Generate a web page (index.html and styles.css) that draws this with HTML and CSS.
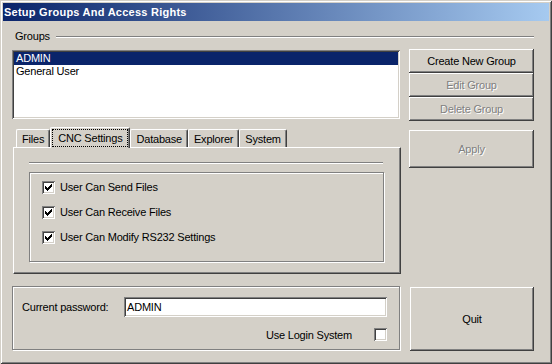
FILE: index.html
```html
<!DOCTYPE html>
<html>
<head>
<meta charset="utf-8">
<title>Setup Groups And Access Rights</title>
<link rel="stylesheet" href="styles.css">
</head>
<body>
<div class="window">
  <div class="titlebar">Setup Groups And Access Rights</div>
  <div class="main">
    <div class="section-head"><span>Groups</span><div class="etch-line"></div></div>

    <div class="listbox">
      <div class="item selected">ADMIN</div>
      <div class="item">General User</div>
    </div>
    <div class="btn-stack">
      <button class="btn">Create New Group</button>
      <button class="btn disabled">Edit Group</button>
      <button class="btn disabled">Delete Group</button>
    </div>

    <div class="tabs">
      <div class="tab-strip">
        <div class="tab">Files</div>
        <div class="tab active"><span class="focus">CNC Settings</span></div>
        <div class="tab">Database</div>
        <div class="tab">Explorer</div>
        <div class="tab">System</div>
      </div>
      <div class="tab-panel">
        <div class="etch-line panel-line"></div>
        <div class="groupbox checks">
          <div class="check-row"><span class="checkbox"><svg viewBox="0 0 13 13" width="13" height="13"><path d="M3 5h1v1h1v1h1v-1h1v-1h1v-1h1v-1h1v3h-1v1h-1v1h-1v1h-1v1h-1v-1h-1v-1h-1z" fill="#000"/></svg></span>User Can Send Files</div>
          <div class="check-row"><span class="checkbox"><svg viewBox="0 0 13 13" width="13" height="13"><path d="M3 5h1v1h1v1h1v-1h1v-1h1v-1h1v-1h1v3h-1v1h-1v1h-1v1h-1v1h-1v-1h-1v-1h-1z" fill="#000"/></svg></span>User Can Receive Files</div>
          <div class="check-row"><span class="checkbox"><svg viewBox="0 0 13 13" width="13" height="13"><path d="M3 5h1v1h1v1h1v-1h1v-1h1v-1h1v-1h1v3h-1v1h-1v1h-1v1h-1v1h-1v-1h-1v-1h-1z" fill="#000"/></svg></span>User Can Modify RS232 Settings</div>
        </div>
      </div>
    </div>
    <button class="btn disabled apply">Apply</button>

    <div class="groupbox password-box">
      <div class="pw-row"><span class="pw-label">Current password:</span><div class="textbox">ADMIN</div></div>
      <div class="login-row"><span>Use Login System</span><span class="checkbox"></span></div>
    </div>
    <button class="btn quit">Quit</button>
  </div>
</div>
</body>
</html>
```
FILE: styles.css
```css
* { box-sizing: border-box; }
body {
  margin: 0;
  font-family: "Liberation Sans", Arial, sans-serif;
  font-size: 11px;
  letter-spacing: -0.2px;
  color: #000;
  background: #d4d0c8;
}
.window {
  width: 552px;
  height: 364px;
  background: #d4d0c8;
  padding: 3px;
  box-shadow: inset 1px 1px #d4d0c8, inset -1px -1px #404040, inset 2px 2px #fff, inset -2px -2px #808080;
}
.titlebar {
  height: 18px;
  background: linear-gradient(to right, #0a246a, #a6caf0);
  color: #fff;
  font-weight: bold;
  letter-spacing: 0.25px;
  line-height: 18px;
  padding-left: 1px;
}
.main {
  display: grid;
  grid-template-columns: 388px 125px;
  column-gap: 9px;
  margin-left: 9px;
  align-items: start;
}
.section-head {
  grid-column: 1 / span 2;
  margin-top: 9px;
  height: 13px;
  line-height: 13px;
  display: flex;
  align-items: center;
  padding-left: 3px;
  gap: 6px;
}
.etch-line {
  height: 2px;
  border-top: 1px solid #808080;
  border-bottom: 1px solid #fff;
}
.section-head .etch-line { flex: 1; margin-top: 1px; }
.listbox {
  margin-top: 7px;
  height: 69px;
  background: #fff;
  padding: 2px;
  box-shadow: inset 1px 1px #808080, inset -1px -1px #fff, inset 2px 2px #404040, inset -2px -2px #d4d0c8;
}
.item { height: 13px; line-height: 13px; padding-left: 2px; }
.item.selected { background: #0a246a; color: #fff; }
.btn-stack {
  margin-top: 6px;
  display: flex;
  flex-direction: column;
}
.btn {
  height: 24px;
  font: inherit;
  letter-spacing: inherit;
  color: #000;
  background: #d4d0c8;
  border: 0;
  padding: 0;
  display: flex;
  align-items: center;
  justify-content: center;
  box-shadow: inset -1px -1px #404040, inset 1px 1px #fff, inset -2px -2px #808080, inset 2px 2px #d4d0c8;
}
.btn.disabled { color: #808080; text-shadow: 1px 1px #fff; }
.tabs {
  margin-top: 6px;
  margin-left: 1px;
  width: 388px;
}
.tab-strip {
  height: 20px;
  display: flex;
  align-items: flex-end;
  padding-left: 3px;
}
.tab {
  height: 18px;
  padding: 2px 5px 0;
  line-height: 15px;
  border: 1px solid;
  border-color: #fff #404040 transparent #fff;
  border-bottom: 0;
  border-radius: 2px 2px 0 0;
  box-shadow: inset -1px 0 #808080;
  white-space: nowrap;
}
.tab.active {
  height: 21px;
  margin-bottom: -1px;
  position: relative;
  z-index: 1;
  background: #d4d0c8;
  padding: 1px 1px 0;
}
.focus {
  display: block;
  border: 1px dotted #000;
  padding: 1px 5px;
  line-height: 14px;
}
.tab-panel {
  height: 127px;
  border: 1px solid;
  border-color: #fff #404040 #404040 #fff;
  box-shadow: inset -1px -1px #808080;
  padding: 14px 0 0 15px;
}
.panel-line { width: 354px; }
.groupbox {
  border: 1px solid #808080;
  box-shadow: inset 1px 1px #fff, 1px 1px #fff;
}
.checks {
  margin-top: 8px;
  width: 355px;
  height: 90px;
  padding: 8px 0 0 12px;
  display: flex;
  flex-direction: column;
  gap: 12px;
}
.check-row {
  display: flex;
  align-items: center;
  gap: 5px;
  height: 13px;
  line-height: 13px;
}
.checkbox {
  width: 13px;
  height: 13px;
  flex: none;
  background: #fff;
  box-shadow: inset 1px 1px #808080, inset -1px -1px #fff, inset 2px 2px #404040, inset -2px -2px #d4d0c8;
}
.checkbox svg { display: block; }
.apply { margin-top: 9px; height: 38px; }
.password-box {
  margin-top: 12px;
  height: 64px;
  padding: 10px 12px 0 9px;
}
.pw-row { display: flex; align-items: center; }
.pw-label { width: 102px; flex: none; }
.textbox {
  flex: 1;
  height: 20px;
  line-height: 20px;
  background: #fff;
  padding: 0 3px;
  box-shadow: inset 1px 1px #808080, inset -1px -1px #fff, inset 2px 2px #404040, inset -2px -2px #d4d0c8;
}
.login-row {
  margin-top: 11px;
  display: flex;
  justify-content: flex-end;
  align-items: center;
  gap: 22px;
  height: 13px;
}
.quit {
  margin-top: 13px;
  margin-left: 1px;
  width: 124px;
  height: 64px;
}
```
